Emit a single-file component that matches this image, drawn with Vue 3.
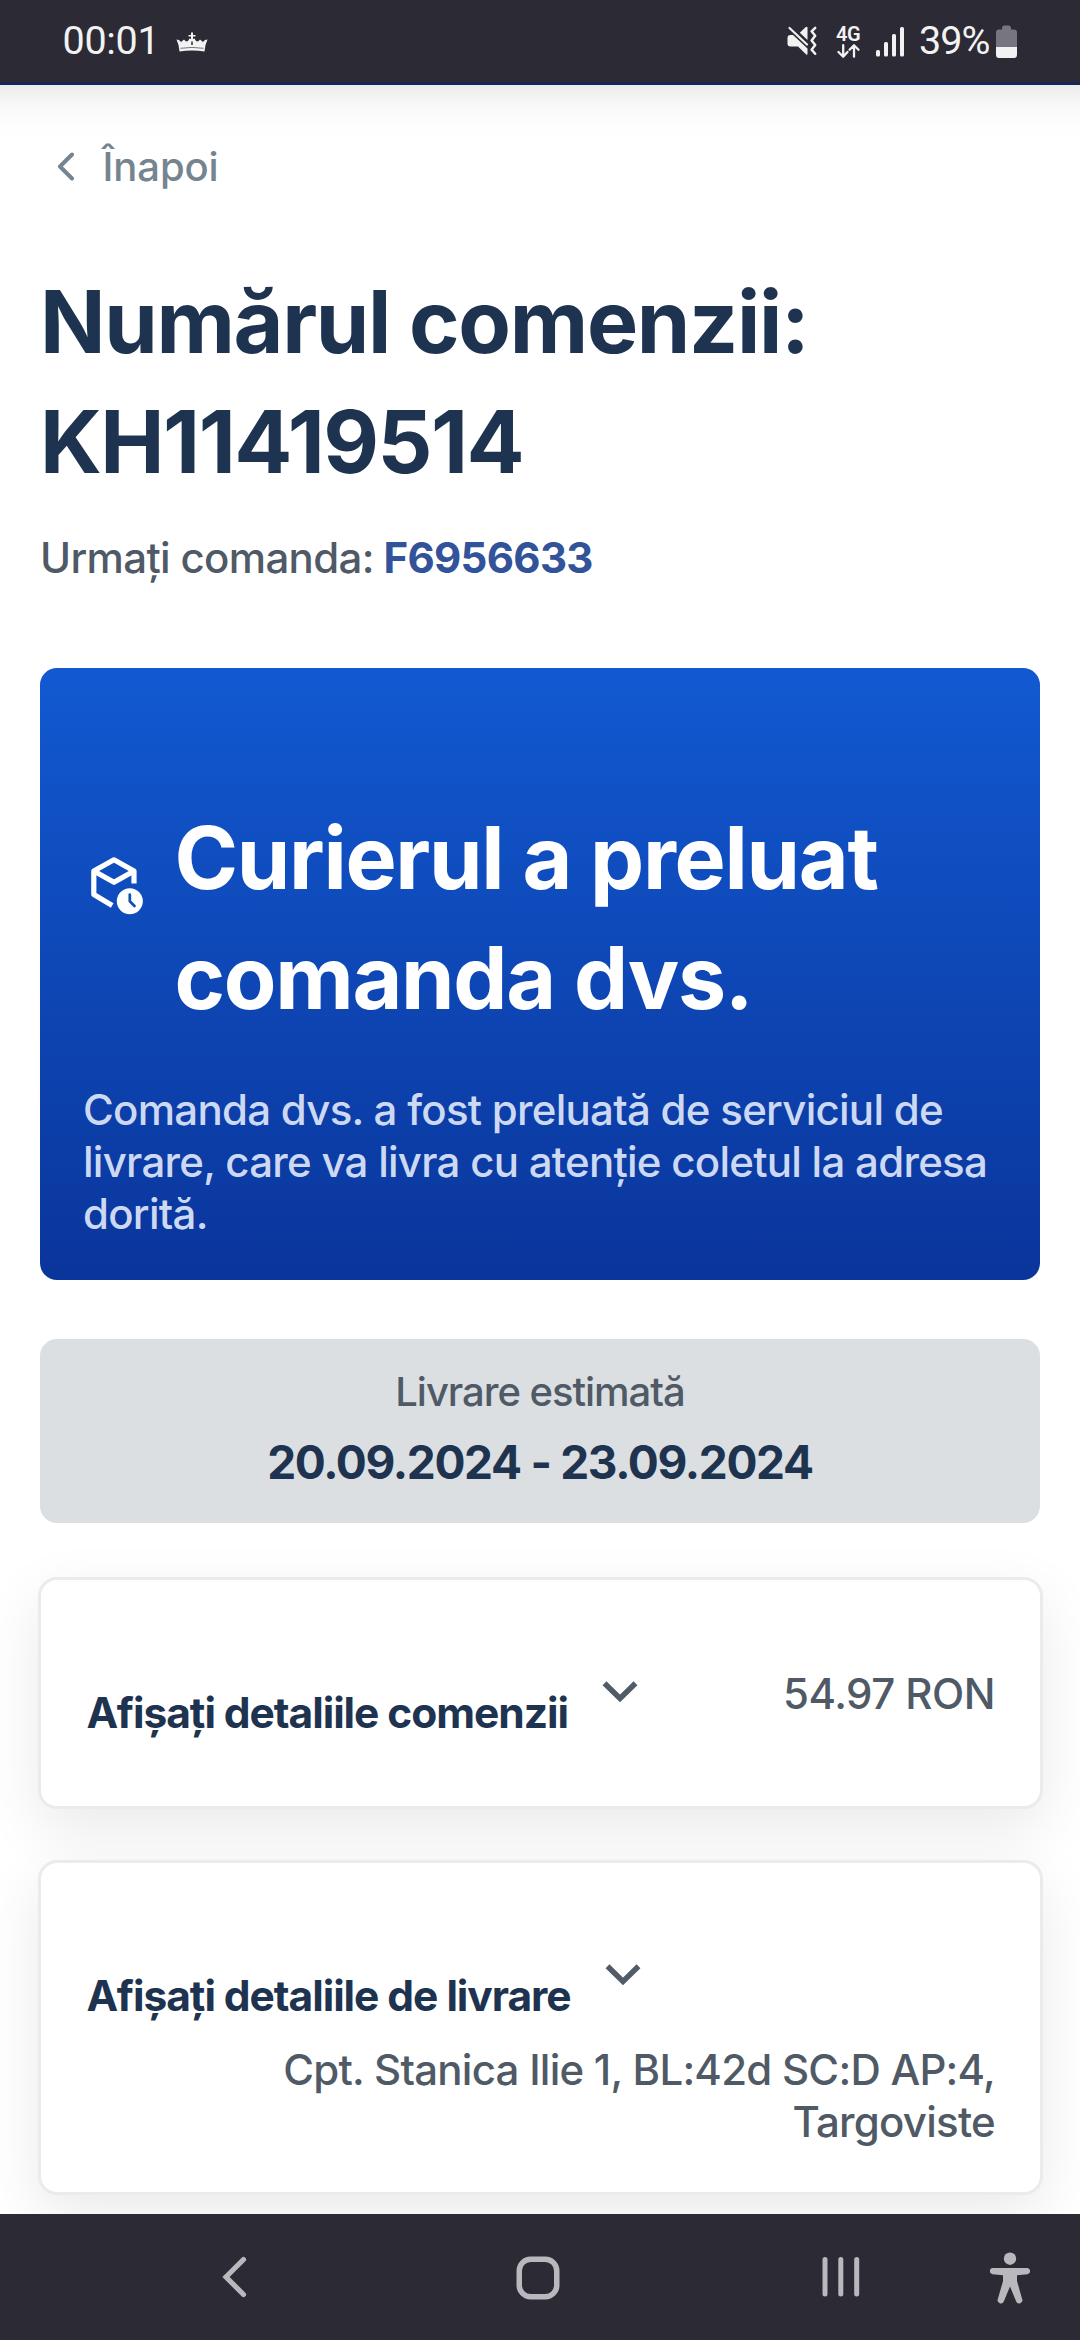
<script setup>
const details = [
  { title: 'Afișați detaliile comenzii', value: ['54.97 RON'], kind: 'order' },
  { title: 'Afișați detaliile de livrare', value: ['Cpt. Stanica Ilie 1, BL:42d SC:D AP:4,', 'Targoviste'], kind: 'delivery' },
]
</script>

<template>
  <div class="screen">
    <header class="status">
      <div class="status-left">
        <span class="clock">00:01</span>
        <svg class="crown" width="32" height="20" viewBox="0 0 32 20" fill="#f2f2f2">
          <path d="M0.5 7.5 3 8 5 10 8 7.5 10 9.5 12 9 13.5 6.500 15 7V4.500H12.500V3H15V0.500H17V3H19.500V4.500H17V7L18.500 6.500 20 9 22 9.500 24 7.500 27 10 29 8 31.500 7.500 29.500 13 28.500 19.500Q16 17.500 3.500 19.500L2.500 13Z" />
          <path d="M4.500 16.300Q16 14.500 27.500 16.300" fill="none" stroke="#77767d" stroke-width="1" />
          <path d="M16 9.500v3.500" stroke="#2c2a34" stroke-width="1.500" />
        </svg>
      </div>
      <div class="status-right">
        <svg class="mute" width="30" height="30" viewBox="0 0 30 30">
          <path d="M0.500 12Q0.500 9 3.500 9H6L20.500 22.500V27.500Q20.500 29.500 19 28.200L11 20.500H3.500Q0.500 20.500 0.500 17.500Z" fill="#f2f2f2" />
          <path d="M12.800 6.800 18.500 1.200Q20.500 0 20.500 2V14Z" fill="#f2f2f2" />
          <path d="M2.500 2 20 18.500" stroke="#f2f2f2" stroke-width="2.200" stroke-linecap="round" />
          <path d="M28.200 1.800 24.600 5.300 28.200 9.800 24.600 14.500 28.200 19 24.600 23.700 28.200 27.800" fill="none" stroke="#f2f2f2" stroke-width="2.500" stroke-linejoin="round" stroke-linecap="round" />
        </svg>
        <div class="network">
          <span>4G</span>
          <svg width="23" height="14" viewBox="0 0 23 14" fill="none" stroke="#f2f2f2" stroke-width="2.300" stroke-linecap="round" stroke-linejoin="round">
            <path d="M6.200 1.200V12.500M1.500 8 6.200 12.700 10.500 8M17 12.700V1.500M12.600 5.800 17 1.300 21.500 5.800" />
          </svg>
        </div>
        <svg class="signal" width="28" height="30" viewBox="0 0 28 30" fill="#f2f2f2">
          <rect x="0" y="23" width="4" height="6.500" rx="1.500" />
          <rect x="8" y="15" width="4" height="14.500" rx="1.500" />
          <rect x="16" y="7" width="4" height="22.500" rx="1.500" />
          <rect x="24" y="0" width="4" height="29.500" rx="1.500" />
        </svg>
        <span class="percent">39%</span>
        <svg class="battery" width="21" height="33" viewBox="0 0 21 33">
          <path d="M6 3Q6 0.500 8 0.500H13Q15 0.500 15 3V4.500H18Q21 4.500 21 7.500V22H0V7.500Q0 4.500 3 4.500H6Z" fill="#77757e" />
          <path d="M0 22H21V29.500Q21 33 18 33H3Q0 33 0 29.500Z" fill="#f2f2f2" />
        </svg>
      </div>
    </header>

    <main class="page">
      <a class="back">
        <svg width="18" height="30" viewBox="0 0 18 30" fill="none" stroke="#75848f" stroke-width="4" stroke-linecap="round" stroke-linejoin="round">
          <path d="M15 2.500 3 14.500 15 26.500" />
        </svg>
        <span>Înapoi</span>
      </a>

      <h1>Numărul comenzii:<br /><span class="order-no">KH11419514</span></h1>
      <p class="track"><span>Urmați comanda:</span><a>F6956633</a></p>

      <section class="hero">
        <div class="hero-head">
          <svg width="52" height="58" viewBox="0 0 52 58">
            <g fill="none" stroke="#fff" stroke-width="5.200" stroke-linejoin="round">
              <path d="M43 26.500V14L23 2.800 2.800 14V37.500L21.200 48.500" />
              <path d="M2.800 14 23 25.300 43 14" />
            </g>
            <circle cx="38.800" cy="44.300" r="13" fill="#fff" />
            <path d="M38.800 37.500V44.300L43.500 49" fill="none" stroke="#0f4cbc" stroke-width="2.700" stroke-linecap="round" stroke-linejoin="round" />
          </svg>
          <h2>Curierul a preluat<br />comanda dvs.</h2>
        </div>
        <p>Comanda dvs. a fost preluată de serviciul de<br />livrare, care va livra cu atenție coletul la adresa<br />dorită.</p>
      </section>

      <section class="estimate">
        <span class="label">Livrare estimată</span>
        <strong>20.09.2024 - 23.09.2024</strong>
      </section>

      <section v-for="d in details" :key="d.kind" class="detail" :class="d.kind">
        <div class="toggle">
          <h3>{{ d.title }}</h3>
          <svg width="36" height="22" viewBox="0 0 36 22" fill="none" stroke="#515c68" stroke-width="5.500">
            <path d="M2.500 2.200 18 17.500 33.500 2.200" />
          </svg>
        </div>
        <div class="value">
          <div v-for="line in d.value" :key="line">{{ line }}</div>
        </div>
      </section>
    </main>

    <nav class="navbar">
      <svg class="nav-back" width="26" height="42" viewBox="0 0 26 42" fill="none" stroke="#b9b8bc" stroke-width="5.200" stroke-linecap="round">
        <path d="M21.500 3.500 4 21 21.500 38.500" />
      </svg>
      <svg class="nav-home" width="44" height="44" viewBox="0 0 44 44" fill="none" stroke="#b9b8bc" stroke-width="5.500">
        <rect x="3.250" y="3.250" width="37.500" height="37.500" rx="11.500" />
      </svg>
      <svg class="nav-recent" width="38" height="42" viewBox="0 0 38 42" stroke="#b9b8bc" stroke-width="5" stroke-linecap="round">
        <path d="M3 3.500V38M18.800 3.500V38M34.700 3.500V38" />
      </svg>
      <svg class="nav-access" width="42" height="52" viewBox="0 0 42 52" fill="#b9b8bc">
        <circle cx="21" cy="6.700" r="6.200" />
        <path d="M3.500 16H38.500A3.200 3.200 0 0 1 38.500 22.300L28 23.300V29L33 46.500A3 3 0 0 1 27.200 49.500L21 34.500 14.800 49.500A3 3 0 0 1 9 46.500L14 29V23.300L3.500 22.300A3.200 3.200 0 0 1 3.500 16Z" />
      </svg>
    </nav>
  </div>
</template>

<style>
body {
  overflow: hidden;
  background: #fff;
}
</style>

<style scoped>
.screen {
  display: flex;
  flex-direction: column;
  width: 1080px;
  height: 2340px;
  overflow: hidden;
  background: #fff;
  font-family: Inter, "Liberation Sans", sans-serif;
  color: #4f5a66;
}
svg { flex: none; display: block; }
h1, h2, h3, p { margin: 0; }

.status {
  display: flex;
  justify-content: space-between;
  flex: none;
  box-sizing: border-box;
  height: 85px;
  background: #2c2a34;
  border-bottom: 3px solid #15265a;
  font-family: Roboto, sans-serif;
  color: #f2f2f2;
}
.status-left, .status-right { display: flex; }
.status-left { padding-left: 62.500px; }
.clock { font-size: 39.500px; line-height: 82px; letter-spacing: -0.300px; width: 113px; }
.crown { margin-top: 32px; }
.status-right { padding-right: 63px; }
.mute { margin-top: 26px; }
.network { display: flex; flex-direction: column; width: 24px; margin: 26px 0 0 19px; }
.network span { font-size: 20px; font-weight: 600; line-height: 17px; letter-spacing: -0.500px; }
.network svg { margin: 1px 0 0 0.500px; }
.signal { margin: 27px 0 0 16px; }
.percent { margin-left: 15px; font-size: 39.500px; line-height: 82px; letter-spacing: -0.900px; width: 73px; }
.battery { margin: 25px 0 0 4px; }

.page {
  flex: none;
  box-sizing: border-box;
  height: 2129px;
  padding: 0 38px;
  background: linear-gradient(#ebebeb, #f8f8f8 20px, #fdfdfd 40px, #fff 56px);
}
.back {
  display: flex;
  align-items: center;
  height: 50px;
  padding: 57px 0 0 19px;
  color: #75848f;
}
.back span { margin-left: 27.500px; font-size: 40px; line-height: 50px; letter-spacing: -0.100px; font-weight: 500; }
h1 {
  margin-top: 69.500px;
  padding-left: 2px;
  font-size: 86px;
  line-height: 120px;
  font-weight: 700;
  letter-spacing: -1.330px;
  color: #1e3350;
}
.order-no { letter-spacing: -1.500px; }
.track { display: flex; margin-top: 30.500px; padding-left: 2px; font-size: 42px; line-height: 52px; }
.track span { width: 343.500px; font-weight: 500; letter-spacing: -0.660px; white-space: nowrap; }
.track a { color: #32529a; font-weight: 700; letter-spacing: -0.700px; }

.hero {
  box-sizing: border-box;
  height: 612px;
  margin: 84px 2px 0;
  padding: 130px 44px 0;
  border-radius: 17px;
  background: linear-gradient(#1259d1, #0a359b);
}
.hero-head { display: flex; margin-left: 7px; }
.hero-head svg { margin-top: 59px; }
.hero-head h2 {
  margin-left: 31.500px;
  font-size: 86px;
  line-height: 120px;
  font-weight: 700;
  letter-spacing: -1.300px;
  color: #fff;
}
.hero p { margin: 46px 0 0 -1px; font-size: 42px; line-height: 52px; font-weight: 500; letter-spacing: -0.730px; color: #cdd9f2; white-space: nowrap; }

.estimate {
  display: flex;
  flex-direction: column;
  align-items: center;
  box-sizing: border-box;
  height: 184px;
  margin: 59px 2px 0;
  padding-top: 28px;
  border-radius: 17px;
  background: #dbdfe2;
}
.label { font-size: 40px; line-height: 50px; font-weight: 500; letter-spacing: -1.040px; }
.estimate strong { margin-top: 17px; font-size: 46px; line-height: 56px; font-weight: 700; letter-spacing: -1.330px; color: #1e3350; }

.detail {
  display: flex;
  justify-content: space-between;
  box-sizing: border-box;
  width: 1005px;
  border: 3px solid #ebebeb;
  border-radius: 19px;
  margin-left: -0.500px;
  padding: 0 44.500px 0 46px;
  background: #fff;
  background-clip: padding-box;
  box-shadow: 0 20px 60px rgba(0, 0, 0, 0.085);
}
.order { height: 232px; margin-top: 54px; }
.delivery { flex-direction: column; justify-content: flex-start; height: 335px; margin-top: 51px; }
.toggle { display: flex; }
h3 { margin-top: 107px; font-size: 42.500px; line-height: 52px; font-weight: 700; letter-spacing: -1.050px; color: #1e3350; white-space: nowrap; }
.toggle svg { margin: 101px 0 0 34px; }
.value { font-size: 42px; line-height: 52px; font-weight: 500; letter-spacing: -0.750px; text-align: right; white-space: nowrap; }
.order .value { margin-top: 88px; letter-spacing: -0.510px; }
.delivery .value { margin-top: 21.500px; }

.navbar {
  display: flex;
  flex: none;
  height: 126px;
  background: #2c2a34;
}
.nav-back { margin: 42px 0 0 222px; }
.nav-home { margin: 41.500px 0 0 267.500px; }
.nav-recent { margin: 42px 0 0 262px; }
.nav-access { margin: 38px 0 0 129px; }
</style>
